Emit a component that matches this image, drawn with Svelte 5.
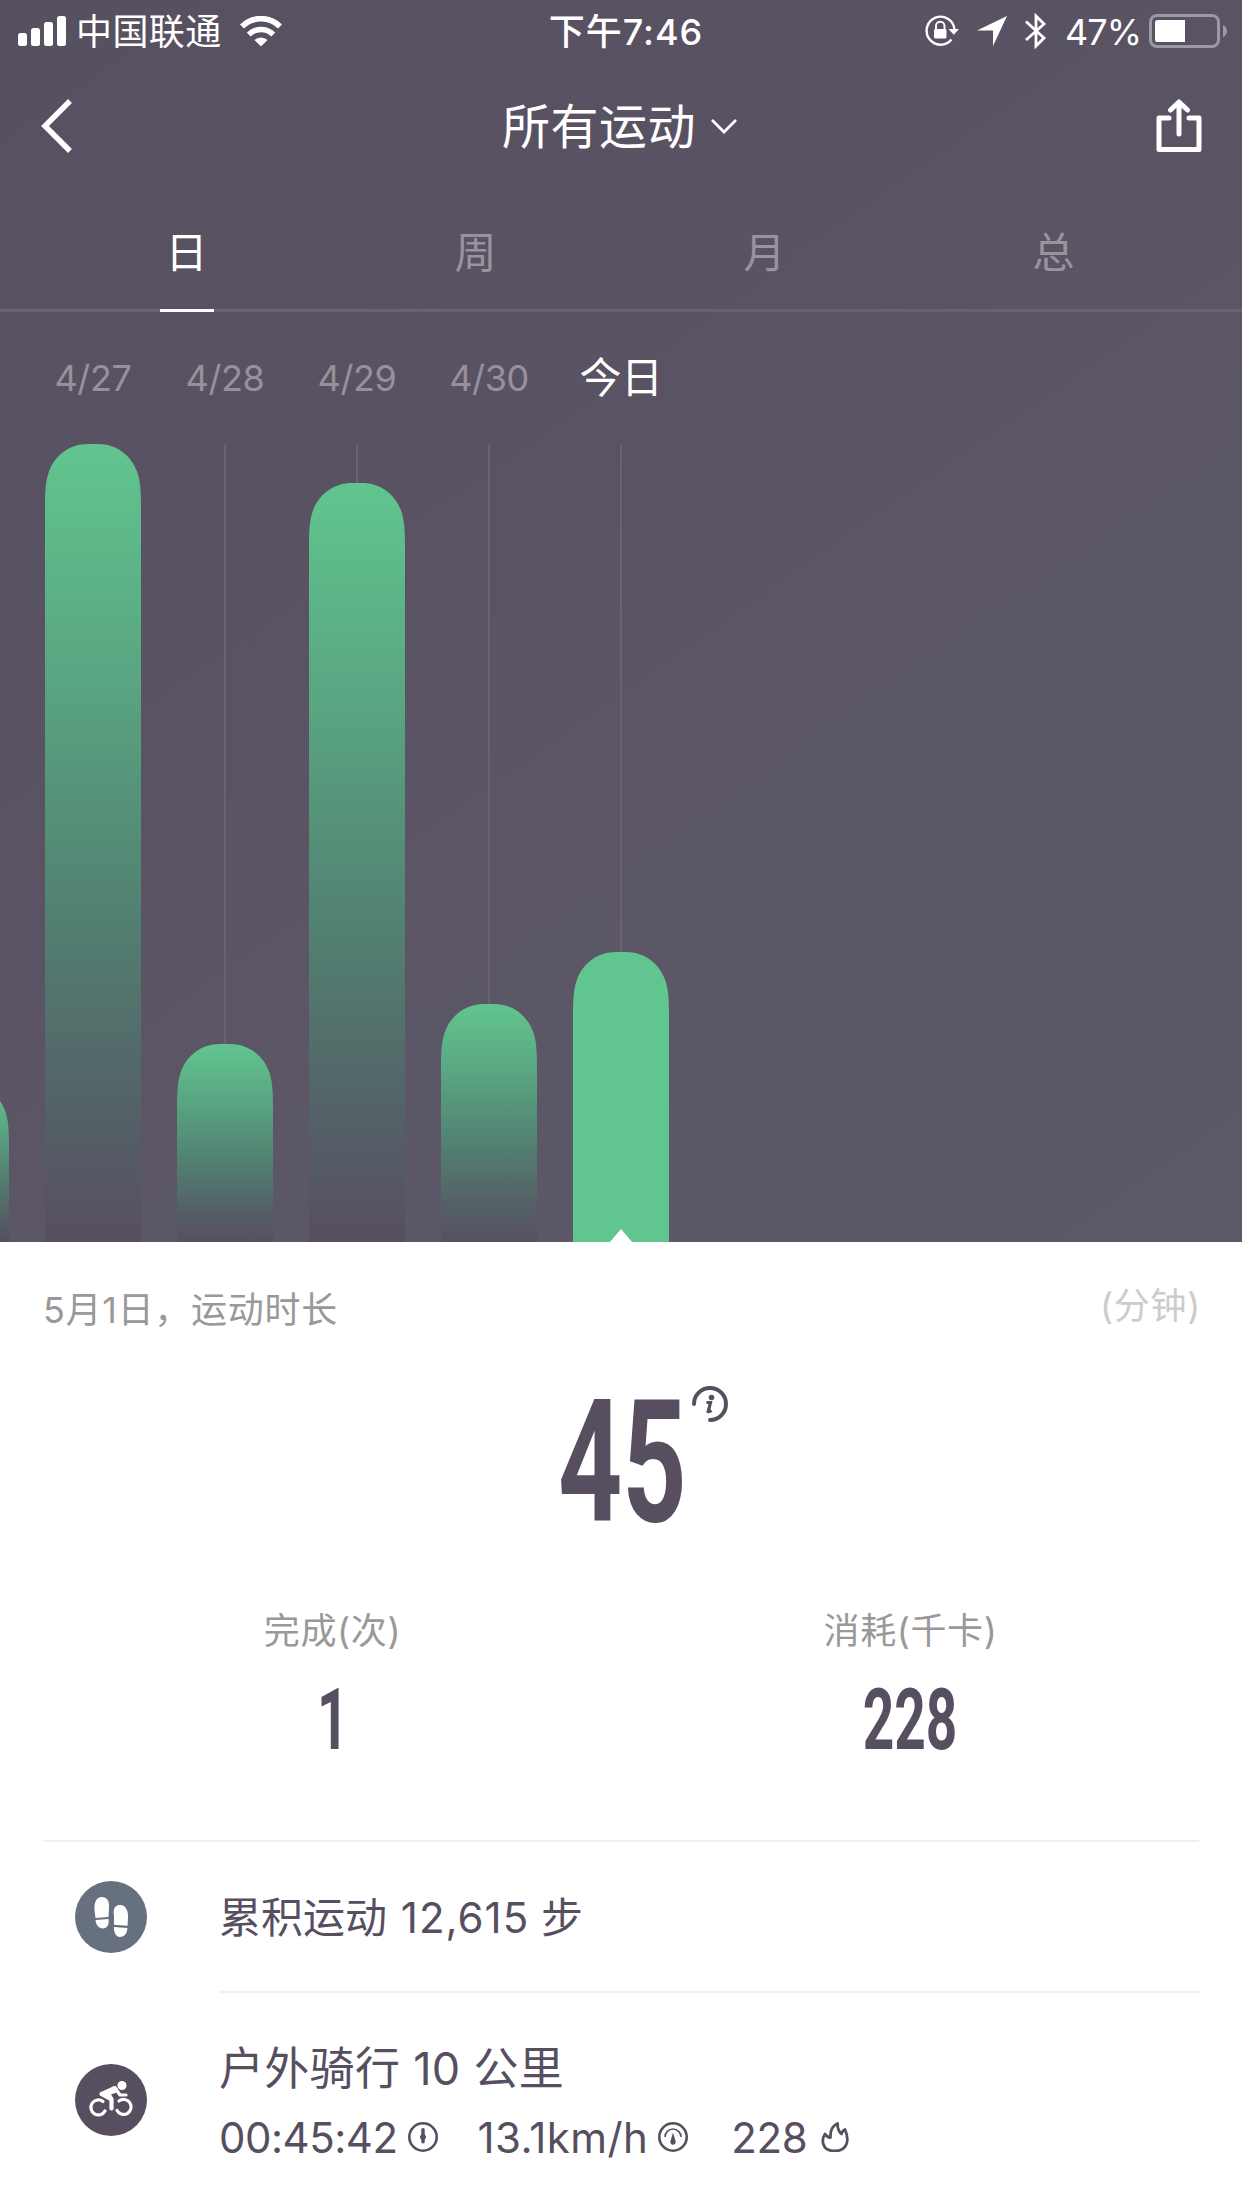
<script>
  const tabs = ["日", "周", "月", "总"];
  let activeTab = $state("日");

  const chartHeight = 798;
  const days = [
    { label: "", height: 159 },
    { label: "4/27", height: 798 },
    { label: "4/28", height: 198 },
    { label: "4/29", height: 759 },
    { label: "4/30", height: 238 },
    { label: "今日", height: 290, today: true },
  ];

  const totals = [
    { label: "完成(次)", value: "1" },
    { label: "消耗(千卡)", value: "228" },
  ];

  // rounded top with smooth shoulders, flat bottom
  function barPath(h) {
    return `M0 ${h}V64C0 48 0.500 37 4 27.500C10 11 25 0 43 0H53C71 0 86 11 92 27.500C95.500 37 96 48 96 64V${h}Z`;
  }
</script>

<div class="screen">
  <section class="top">
    <div class="status">
      <div class="status-left">
        <svg class="signal" width="48" height="30" viewBox="0 0 48 30" fill="#fff">
          <rect x="0" y="17" width="9" height="13" rx="2.500" />
          <rect x="13" y="12" width="9" height="18" rx="2.500" />
          <rect x="26" y="6" width="9" height="24" rx="2.500" />
          <rect x="39" y="0" width="9" height="30" rx="2.500" />
        </svg>
        <span class="carrier">中国联通</span>
        <svg class="wifi" width="42" height="30" viewBox="0 0 42 30">
          <path d="M2 10.500A27 27 0 0 1 40 10.500" fill="none" stroke="#fff" stroke-width="5.800" />
          <path d="M8.700 18.500A17.500 17.500 0 0 1 33.300 18.500" fill="none" stroke="#fff" stroke-width="5.400" />
          <path d="M14.500 24A9.500 9.500 0 0 1 27.500 24L21 30.500Z" fill="#fff" />
        </svg>
      </div>
      <span class="time">下午7:46</span>
      <div class="status-right">
        <svg class="lock" width="36" height="32" viewBox="0 0 36 32">
          <path d="M26.500 24.500A14 14 0 1 1 29.500 14" fill="none" stroke="#fff" stroke-width="2.400" />
          <path d="M23.500 14H34L28.800 19.800Z" fill="#fff" />
          <rect x="9" y="14" width="12.500" height="9.500" rx="1.500" fill="#fff" />
          <path d="M11 15V11A4.200 4.200 0 0 1 19.500 11V15" fill="none" stroke="#fff" stroke-width="2" />
        </svg>
        <svg class="location" width="30" height="30" viewBox="0 0 30 30">
          <path d="M30 0L16 30V14.500H0Z" fill="#fff" />
        </svg>
        <svg class="bluetooth" width="22" height="36" viewBox="0 0 22 36">
          <path d="M1 8.500L19 25L11 33V3L19 11L1 27" fill="none" stroke="#fff" stroke-width="2.800" />
        </svg>
        <span class="percent">47%</span>
        <svg class="battery" width="78" height="34" viewBox="0 0 78 34">
          <rect x="1.500" y="1.500" width="68" height="31" rx="6.500" fill="none" stroke="#9d98a2" stroke-width="3" />
          <path d="M8.500 6H36V28H8.500Q6 28 6 25.500V8.500Q6 6 8.500 6Z" fill="#fff" />
          <path d="M74 11Q78 13 78 17T74 23Z" fill="#9d98a2" />
        </svg>
      </div>
    </div>

    <header class="nav">
      <svg width="32" height="54" viewBox="0 0 32 54">
        <path d="M29 2L4 27L29 52" fill="none" stroke="#fff" stroke-width="5.500" />
      </svg>
      <div class="title">
        <span>所有运动</span>
        <svg width="28" height="18" viewBox="0 0 28 18">
          <path d="M2 3L14 15L26 3" fill="none" stroke="#fff" stroke-width="2.800" />
        </svg>
      </div>
      <svg width="46" height="54" viewBox="0 0 46 54" fill="none" stroke="#fff" stroke-width="5" stroke-linecap="round" stroke-linejoin="round">
        <path d="M13 19H3V50.500H43V19H33" />
        <path d="M23 35V4M14.500 11L23 3L31.500 11" />
      </svg>
    </header>

    <nav class="tabs">
      {#each tabs as tab}
        <button class="tab" class:active={tab === activeTab} onclick={() => (activeTab = tab)}>{tab}</button>
      {/each}
    </nav>

    <div class="chart">
      {#each days as day}
        <div class="day">
          <span class="date" class:today={day.today}>{day.label}</span>
          <div class="track" style="height: {chartHeight}px">
            <div class="line"></div>
            <svg width="96" height={day.height} viewBox="0 0 96 {day.height}">
              <defs>
                <linearGradient id="bar-fade" x1="0" y1="0" x2="0" y2="1">
                  <stop offset="0" stop-color="#61c58f" />
                  <stop offset="0.300" stop-color="#59a481" />
                  <stop offset="0.600" stop-color="#527f71" />
                  <stop offset="0.850" stop-color="#545f66" />
                  <stop offset="1" stop-color="#574f5e" />
                </linearGradient>
              </defs>
              <path d={barPath(day.height)} fill={day.today ? "#61c58f" : "url(#bar-fade)"} />
              {#if day.today}
                <path d="M48 {day.height - 13}L59 {day.height}H37Z" fill="#fff" />
              {/if}
            </svg>
          </div>
        </div>
      {/each}
    </div>
  </section>

  <section class="summary">
    <div class="caption">
      <span class="what">5月1日，运动时长</span>
      <span class="unit">(分钟)</span>
    </div>

    <div class="minutes">
      <span class="big">45</span>
      <svg class="info" width="38" height="38" viewBox="0 0 38 38">
        <path d="M3 19A16 16 0 1 1 19 35" fill="none" stroke="#574f5f" stroke-width="4" stroke-linecap="round" />
        <circle cx="20.500" cy="12.500" r="2.800" fill="#574f5f" />
        <path d="M15.500 17.500H19.500L17.200 26.500Q18.500 27 20.500 25.500" fill="none" stroke="#574f5f" stroke-width="3.200" />
      </svg>
    </div>

    <div class="totals">
      {#each totals as total}
        <div class="total">
          <span class="total-label">{total.label}</span>
          <span class="total-value">{total.value}</span>
        </div>
      {/each}
    </div>
  </section>

  <section class="records">
    <div class="record steps">
      <svg class="badge" width="72" height="72" viewBox="0 0 72 72">
        <circle cx="36" cy="36" r="36" fill="#66707e" />
        <g fill="#fff">
          <path d="M19.500 29C19 22 21 16 27 16C33 16 34.500 21 34 27L33.500 36L20.500 37Z" />
          <path d="M20.500 39L33.500 38C34.500 43 32 47.500 28 47.500C23.500 47.500 21 43.500 20.500 39Z" />
          <path d="M39 35C38 29 39 24 45 24C51 24 53.500 30 53 37L52.500 44.800L39 43.800Z" />
          <path d="M39 46L52.500 47C52 52 49.500 56 45 56C41 56 38.500 51 39 46Z" />
        </g>
      </svg>
      <div class="record-body">
        <div class="record-title">累积运动 <span class="count">12,615</span> 步</div>
      </div>
    </div>

    <div class="record ride">
      <svg class="badge" width="72" height="72" viewBox="0 0 72 72">
        <circle cx="36" cy="36" r="36" fill="#574f5f" />
        <g fill="none" stroke="#fff" stroke-width="3.200" stroke-linecap="round" stroke-linejoin="round">
          <path d="M28 37.500A7.500 7.500 0 1 0 30 47" />
          <path d="M44 37A7.500 7.500 0 1 1 42 46.500" />
          <path d="M26.500 30L36.500 35.500V44.500" stroke-width="4.200" />
          <path d="M40.500 24.500L45 31H51" />
        </g>
        <path d="M25 28.500L39 22Q42 21.500 42.500 24.500L43 28L36 30.500L38.500 34.500L36.500 37L25.500 31.500Z" fill="#fff" />
        <circle cx="47" cy="21.500" r="4.500" fill="#fff" />
      </svg>
      <div class="record-body">
        <div class="record-title">户外骑行 10 公里</div>
        <div class="stats">
          <span class="duration">00:45:42</span>
          <svg width="30" height="30" viewBox="0 0 30 30">
            <circle cx="15" cy="15" r="13.700" fill="none" stroke="#574f5f" stroke-width="2.600" />
            <path d="M13.300 7Q15 5 16.700 7V12L18.200 15L16.700 18V20.500Q15 22.500 13.300 20.500V18L11.800 15L13.300 12Z" fill="#574f5f" />
          </svg>
          <span class="speed">13.1km/h</span>
          <svg width="30" height="30" viewBox="0 0 30 30">
            <circle cx="15" cy="15" r="13.700" fill="none" stroke="#574f5f" stroke-width="2.600" />
            <path d="M7 15A8 8 0 0 1 23 15" fill="none" stroke="#574f5f" stroke-width="1.600" />
            <path d="M15 10.500L17.500 19A2.700 2.700 0 1 1 12.500 19Z" fill="#574f5f" />
          </svg>
          <span class="kcal">228</span>
          <svg width="28" height="30" viewBox="0 0 28 30">
            <path d="M4 12C0 18 1 29 13.500 29C26 29 29 19 24 7.500C22.500 8 21 10 20.500 12C18 10 16.500 6 16.500 1.500C11 4 9 8.500 9.500 15.500C7.500 15.500 5.500 14.500 4 12Z" fill="none" stroke="#574f5f" stroke-width="2.800" stroke-linejoin="round" />
          </svg>
        </div>
      </div>
    </div>
  </section>
</div>

<style>
  :global(body) {
    margin: 0;
    background: #fff;
  }

  .screen {
    width: 1242px;
    height: 2208px;
    overflow: hidden;
    background: #fff;
    font-family: Inter, "Noto Sans CJK SC", sans-serif;
    font-weight: 380;
    color: #574f5f;
  }

  svg {
    display: block;
    flex: none;
  }

  .top {
    height: 1242px;
    overflow: hidden;
    background: linear-gradient(145deg, #575060 0%, #5a5363 45%, #5c5767 65%, #5d5868 100%);
    color: #fff;
  }

  .status {
    display: grid;
    grid-template-columns: 1fr auto 1fr;
    align-items: center;
    height: 60px;
    padding: 0 15px 0 18px;
    font-size: 36px;
    line-height: 60px;
  }

  .status-left,
  .status-right {
    display: flex;
    align-items: center;
    height: 60px;
  }

  .status-right {
    justify-content: flex-end;
  }

  .carrier {
    margin-left: 10px;
    padding-top: 2px;
    letter-spacing: 0.400px;
  }

  .wifi {
    margin-left: 18px;
  }

  .time {
    padding-top: 2px;
    padding-left: 7px;
    font-weight: 500;
    letter-spacing: 1px;
  }

  .location {
    margin-left: 16px;
  }

  .bluetooth {
    margin-left: 18px;
  }

  .percent {
    margin-left: 18px;
    padding-top: 1px;
    letter-spacing: -1px;
  }

  .battery {
    margin-left: 8px;
  }

  .nav {
    display: flex;
    align-items: center;
    justify-content: space-between;
    height: 132px;
    padding: 0 40px 0 41px;
  }

  .title {
    display: flex;
    align-items: center;
    gap: 14px;
    padding-left: 11px;
    font-size: 48px;
    letter-spacing: 0.500px;
  }

  .title span {
    padding-bottom: 6px;
  }

  .tabs {
    display: grid;
    grid-template-columns: repeat(4, 289px);
    height: 117px;
    padding: 0 42px;
    border-bottom: 3px solid #696271;
  }

  .tab {
    display: flex;
    justify-content: center;
    justify-self: center;
    width: 54px;
    height: 120px;
    padding: 0;
    border: 0;
    border-bottom: 3px solid transparent;
    background: none;
    color: #98939d;
    font-family: inherit;
    font-size: 42px;
    font-weight: inherit;
    line-height: 121px;
  }

  .tab.active {
    border-color: #fff;
    color: #fff;
  }

  .chart {
    display: flex;
    margin-left: -105px;
  }

  .day {
    flex: none;
    width: 132px;
  }

  .date {
    display: block;
    height: 132px;
    color: #96919b;
    font-size: 36px;
    letter-spacing: -0.400px;
    line-height: 132px;
    text-align: center;
  }

  .date.today {
    color: #fff;
    font-size: 42px;
  }

  .track {
    display: flex;
    flex-direction: column;
    align-items: center;
  }

  .line {
    flex: 1;
    width: 2px;
    background: #696272;
  }

  .summary {
    height: 598px;
    margin: 0 43px;
    border-bottom: 2px solid #f0f0f0;
  }

  .caption {
    display: flex;
    justify-content: space-between;
    height: 134px;
    margin-right: -2px;
    font-size: 36px;
    letter-spacing: 0.700px;
  }

  .what {
    color: #999;
    line-height: 137px;
  }

  .unit {
    color: #ccc;
    line-height: 128px;
  }

  .minutes {
    display: flex;
    justify-content: center;
    height: 220px;
  }

  .big {
    width: 124px;
    margin-right: 9px;
    margin-left: 45px;
    font-family: Roboto, sans-serif;
    font-size: 170px;
    font-weight: 700;
    line-height: 175px;
    transform: scaleX(0.660);
    transform-origin: left;
  }

  .info {
    margin-top: 9px;
  }

  .totals {
    display: grid;
    grid-template-columns: 1fr 1fr;
  }

  .total {
    display: flex;
    flex-direction: column;
    align-items: center;
    padding-left: 1px;
  }

  .total-label {
    height: 68px;
    color: #999;
    font-size: 36px;
    letter-spacing: 0.600px;
    line-height: 70px;
  }

  .total-value {
    font-family: Roboto, sans-serif;
    font-size: 86px;
    font-weight: 700;
    line-height: 111px;
    transform: scaleX(0.640);
  }

  .records {
    padding: 0 43px 0 75px;
    font-size: 42px;
  }

  .record {
    display: flex;
    align-items: center;
  }

  .badge {
    margin-right: 72px;
    margin-bottom: 2px;
  }

  .record-body {
    flex: 1;
  }

  .steps .record-body {
    height: 149px;
    border-bottom: 2px solid #f0f0f0;
    line-height: 151px;
  }

  .count {
    margin: 0 0 0 2px;
    letter-spacing: 1px;
  }

  .ride {
    height: 215px;
  }

  .ride .record-title {
    height: 68px;
    font-size: 45px;
    letter-spacing: 0.300px;
    line-height: 77px;
  }

  .stats {
    display: flex;
    align-items: center;
    height: 68px;
    padding-top: 5px;
  }

  .duration,
  .speed,
  .kcal {
    flex: none;
    margin-right: 10px;
  }

  .duration {
    letter-spacing: -0.500px;
  }

  .speed {
    margin-left: 40px;
    letter-spacing: 0.400px;
  }

  .kcal {
    margin-right: 14px;
    margin-left: 43px;
    letter-spacing: -0.400px;
  }
</style>
